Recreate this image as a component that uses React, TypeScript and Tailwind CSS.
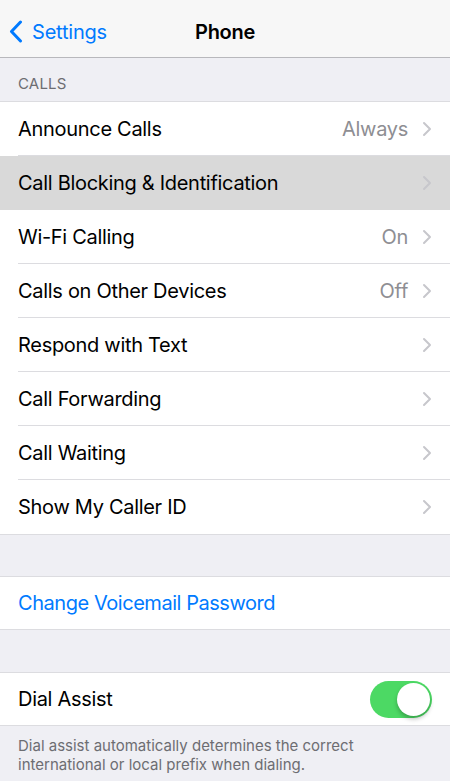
import React from "react";

const Chevron = () => (
  <svg width="10" height="16" viewBox="0 0 10 16" className="ml-[14px] shrink-0">
    <path d="M2 2l6 6-6 6" fill="none" stroke="#c7c7cc" strokeWidth="2" strokeLinecap="round" strokeLinejoin="round" />
  </svg>
);

type RowProps = {
  label: string;
  value?: string;
  selected?: boolean;
  last?: boolean;
};

const Row = ({ label, value, selected, last }: RowProps) => (
  <div className={`h-[54px] pl-[18px] ${selected ? "bg-[#d9d9d9]" : "bg-white"}`}>
    <div
      className={`h-full flex items-center pr-[18px] ${
        last || selected ? "" : "border-b border-[#dcdce0]"
      }`}
    >
      <span className="flex-1 text-[20px] text-black tracking-[-0.3px]">{label}</span>
      {value && <span className="text-[20px] text-[#8e8e93] tracking-[-0.3px]">{value}</span>}
      <Chevron />
    </div>
  </div>
);

const rows: RowProps[] = [
  { label: "Announce Calls", value: "Always" },
  { label: "Call Blocking & Identification", selected: true },
  { label: "Wi-Fi Calling", value: "On" },
  { label: "Calls on Other Devices", value: "Off" },
  { label: "Respond with Text" },
  { label: "Call Forwarding" },
  { label: "Call Waiting" },
  { label: "Show My Caller ID", last: true },
];

export default function App() {
  return (
    <div
      className="w-[450px] h-[781px] overflow-hidden bg-[#efeff4]"
      style={{ fontFamily: "Inter, 'Noto Sans', sans-serif" }}
    >
      <header className="h-[58px] pt-[6px] bg-[#f7f7f7] border-b border-[#b8b8bc] relative flex items-center justify-center">
        <div className="absolute left-[9px] top-[6px] bottom-0 flex items-center gap-[9px] text-[#007aff]">
          <svg width="14" height="23" viewBox="0 0 14 23">
            <path d="M11.5 2L2.5 11.5l9 9.5" fill="none" stroke="#007aff" strokeWidth="3" strokeLinecap="round" strokeLinejoin="round" />
          </svg>
          <span className="text-[20px] tracking-[-0.2px]">Settings</span>
        </div>
        <span className="text-[20px] font-semibold text-black tracking-[-0.3px]">Phone</span>
      </header>

      <div className="h-[44px] flex items-end pl-[18px] pb-[6px] border-b border-[#dcdce0]">
        <span className="text-[15px] text-[#6d6d72] tracking-[0.2px]">CALLS</span>
      </div>
      <div className="border-b border-[#dcdce0]">
        {rows.map((r) => (
          <Row key={r.label} {...r} />
        ))}
      </div>

      <div className="h-[42px] border-b border-[#dcdce0]" />
      <div className="h-[53px] bg-white pl-[18px] flex items-center border-b border-[#dcdce0]">
        <span className="text-[20px] text-[#007aff] tracking-[-0.45px]">Change Voicemail Password</span>
      </div>

      <div className="h-[43px] border-b border-[#dcdce0]" />
      <div className="h-[53px] bg-white pl-[18px] pr-[18px] flex items-center border-b border-[#dcdce0]">
        <span className="flex-1 text-[20px] text-black tracking-[-0.3px]">Dial Assist</span>
        <div className="w-[62px] h-[37px] rounded-full bg-[#4cd964] relative">
          <div className="absolute right-[2px] top-[2px] w-[33px] h-[33px] rounded-full bg-white shadow-[0_3px_4px_rgba(0,0,0,0.25)]" />
        </div>
      </div>

      <p className="px-[18px] pt-[10px] text-[15px] leading-[19px] text-[#6d6d72]">
        Dial assist automatically determines the correct international or local prefix when dialing.
      </p>
    </div>
  );
}
